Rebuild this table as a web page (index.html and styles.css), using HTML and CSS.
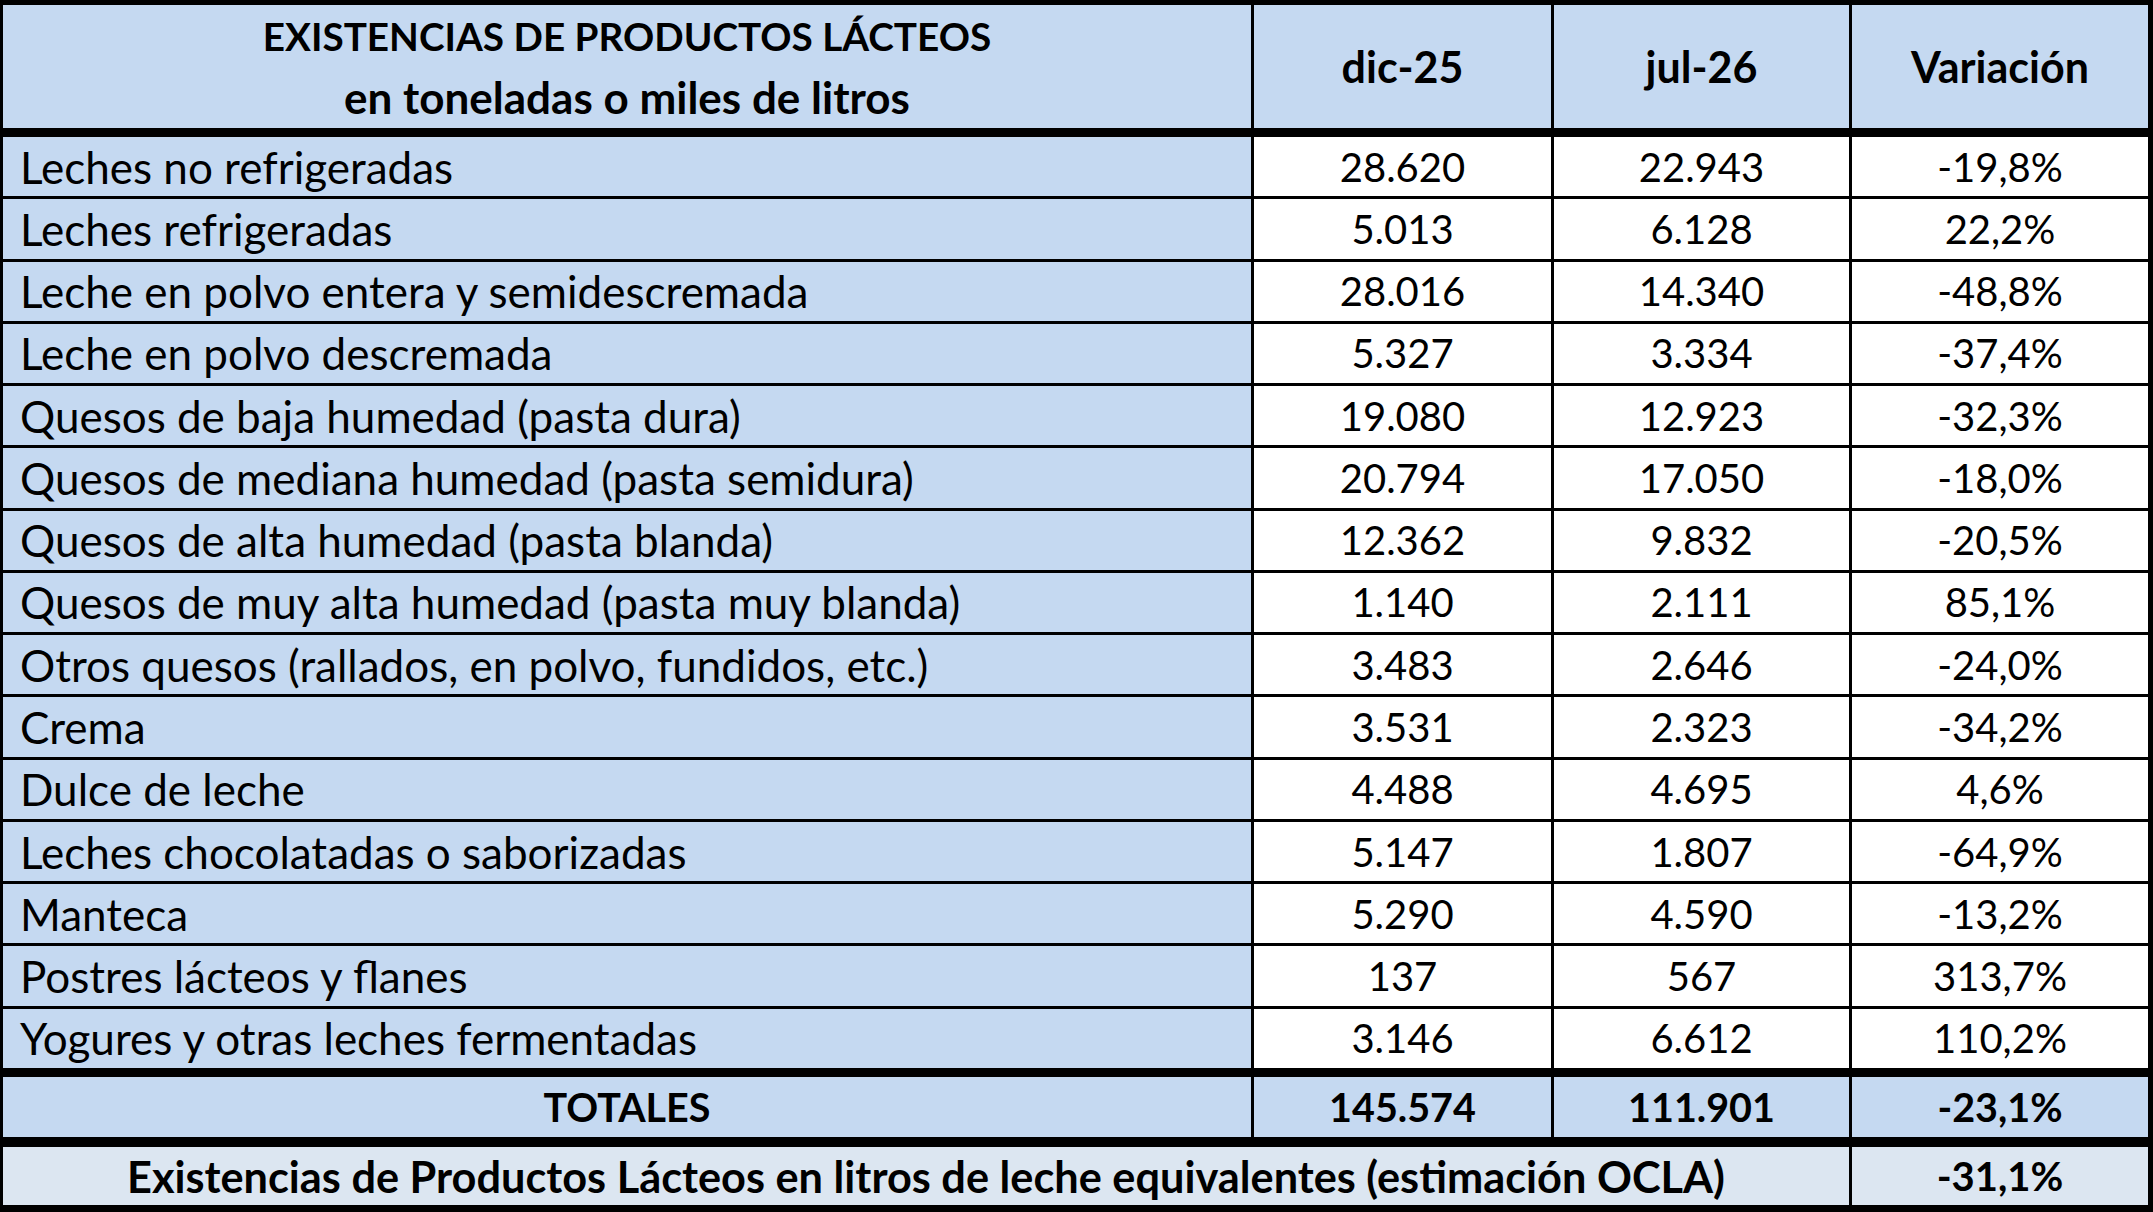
FILE: index.html
```html
<!DOCTYPE html>
<html lang="es">
<head>
<meta charset="utf-8">
<title>Existencias de Productos Lácteos</title>
<link rel="stylesheet" href="styles.css">
</head>
<body>
<div class="table">
  <div class="row head">
    <div class="cell name-head"><span class="title">EXISTENCIAS DE PRODUCTOS LÁCTEOS</span><span class="subtitle">en toneladas o miles de litros</span></div>
    <div class="cell">dic-25</div>
    <div class="cell">jul-26</div>
    <div class="cell">Variación</div>
  </div>
  <div class="row data"><div class="cell name">Leches no refrigeradas</div><div class="cell num">28.620</div><div class="cell num">22.943</div><div class="cell num">-19,8%</div></div>
  <div class="row data"><div class="cell name">Leches refrigeradas</div><div class="cell num">5.013</div><div class="cell num">6.128</div><div class="cell num">22,2%</div></div>
  <div class="row data"><div class="cell name">Leche en polvo entera y semidescremada</div><div class="cell num">28.016</div><div class="cell num">14.340</div><div class="cell num">-48,8%</div></div>
  <div class="row data"><div class="cell name">Leche en polvo descremada</div><div class="cell num">5.327</div><div class="cell num">3.334</div><div class="cell num">-37,4%</div></div>
  <div class="row data"><div class="cell name">Quesos de baja humedad (pasta dura)</div><div class="cell num">19.080</div><div class="cell num">12.923</div><div class="cell num">-32,3%</div></div>
  <div class="row data"><div class="cell name">Quesos de mediana humedad (pasta semidura)</div><div class="cell num">20.794</div><div class="cell num">17.050</div><div class="cell num">-18,0%</div></div>
  <div class="row data"><div class="cell name">Quesos de alta humedad (pasta blanda)</div><div class="cell num">12.362</div><div class="cell num">9.832</div><div class="cell num">-20,5%</div></div>
  <div class="row data"><div class="cell name">Quesos de muy alta humedad (pasta muy blanda)</div><div class="cell num">1.140</div><div class="cell num">2.111</div><div class="cell num">85,1%</div></div>
  <div class="row data"><div class="cell name">Otros quesos (rallados, en polvo, fundidos, etc.)</div><div class="cell num">3.483</div><div class="cell num">2.646</div><div class="cell num">-24,0%</div></div>
  <div class="row data"><div class="cell name">Crema</div><div class="cell num">3.531</div><div class="cell num">2.323</div><div class="cell num">-34,2%</div></div>
  <div class="row data"><div class="cell name">Dulce de leche</div><div class="cell num">4.488</div><div class="cell num">4.695</div><div class="cell num">4,6%</div></div>
  <div class="row data"><div class="cell name">Leches chocolatadas o saborizadas</div><div class="cell num">5.147</div><div class="cell num">1.807</div><div class="cell num">-64,9%</div></div>
  <div class="row data"><div class="cell name">Manteca</div><div class="cell num">5.290</div><div class="cell num">4.590</div><div class="cell num">-13,2%</div></div>
  <div class="row data"><div class="cell name">Postres lácteos y flanes</div><div class="cell num">137</div><div class="cell num">567</div><div class="cell num">313,7%</div></div>
  <div class="row data last"><div class="cell name">Yogures y otras leches fermentadas</div><div class="cell num">3.146</div><div class="cell num">6.612</div><div class="cell num">110,2%</div></div>
  <div class="row total">
    <div class="cell">TOTALES</div>
    <div class="cell">145.574</div>
    <div class="cell">111.901</div>
    <div class="cell">-23,1%</div>
  </div>
  <div class="row final">
    <div class="cell merged">Existencias de Productos Lácteos en litros de leche equivalentes (estimación OCLA)</div>
    <div class="cell">-31,1%</div>
  </div>
</div>
</body>
</html>
```

FILE: styles.css
```css
html, body {
  margin: 0;
  padding: 0;
  background: #ffffff;
}

.table {
  box-sizing: border-box;
  width: 2153px;
  height: 1212px;
  display: flex;
  flex-direction: column;
  gap: 3px;
  padding: 5px 5px 7px 3px;
  background: #000000;
  font-family: "Lato", "Liberation Sans", sans-serif;
  color: #000000;
}

.row {
  display: grid;
  grid-template-columns: 1248px 297px 295px 296px;
  column-gap: 3px;
  flex: none;
}

.cell {
  display: flex;
  align-items: center;
  justify-content: center;
  background: #ffffff;
  font-size: 40px;
  white-space: nowrap;
}

.head {
  height: 123px;
  margin-bottom: 6px;
}

.head .cell {
  background: #c5d9f1;
  font-weight: 700;
  font-size: 43px;
}

.name-head {
  flex-direction: column;
  line-height: 61px;
}

.head .title {
  font-size: 38.7px;
}

.head .subtitle {
  font-size: 44px;
}

.data {
  height: 59.27px;
}

.data.last {
  margin-bottom: 6px;
}

.name {
  justify-content: flex-start;
  padding-left: 17px;
  background: #c5d9f1;
}

.data .name {
  font-size: 44px;
}

.total {
  height: 60px;
  margin-bottom: 7px;
}

.total .cell {
  background: #c5d9f1;
  font-weight: 700;
  font-size: 39.5px;
}

.final {
  height: 58px;
}

.final .cell {
  background: #dce6f1;
  font-weight: 700;
}

.final .merged {
  grid-column: span 3;
  font-size: 43.3px;
}
```
